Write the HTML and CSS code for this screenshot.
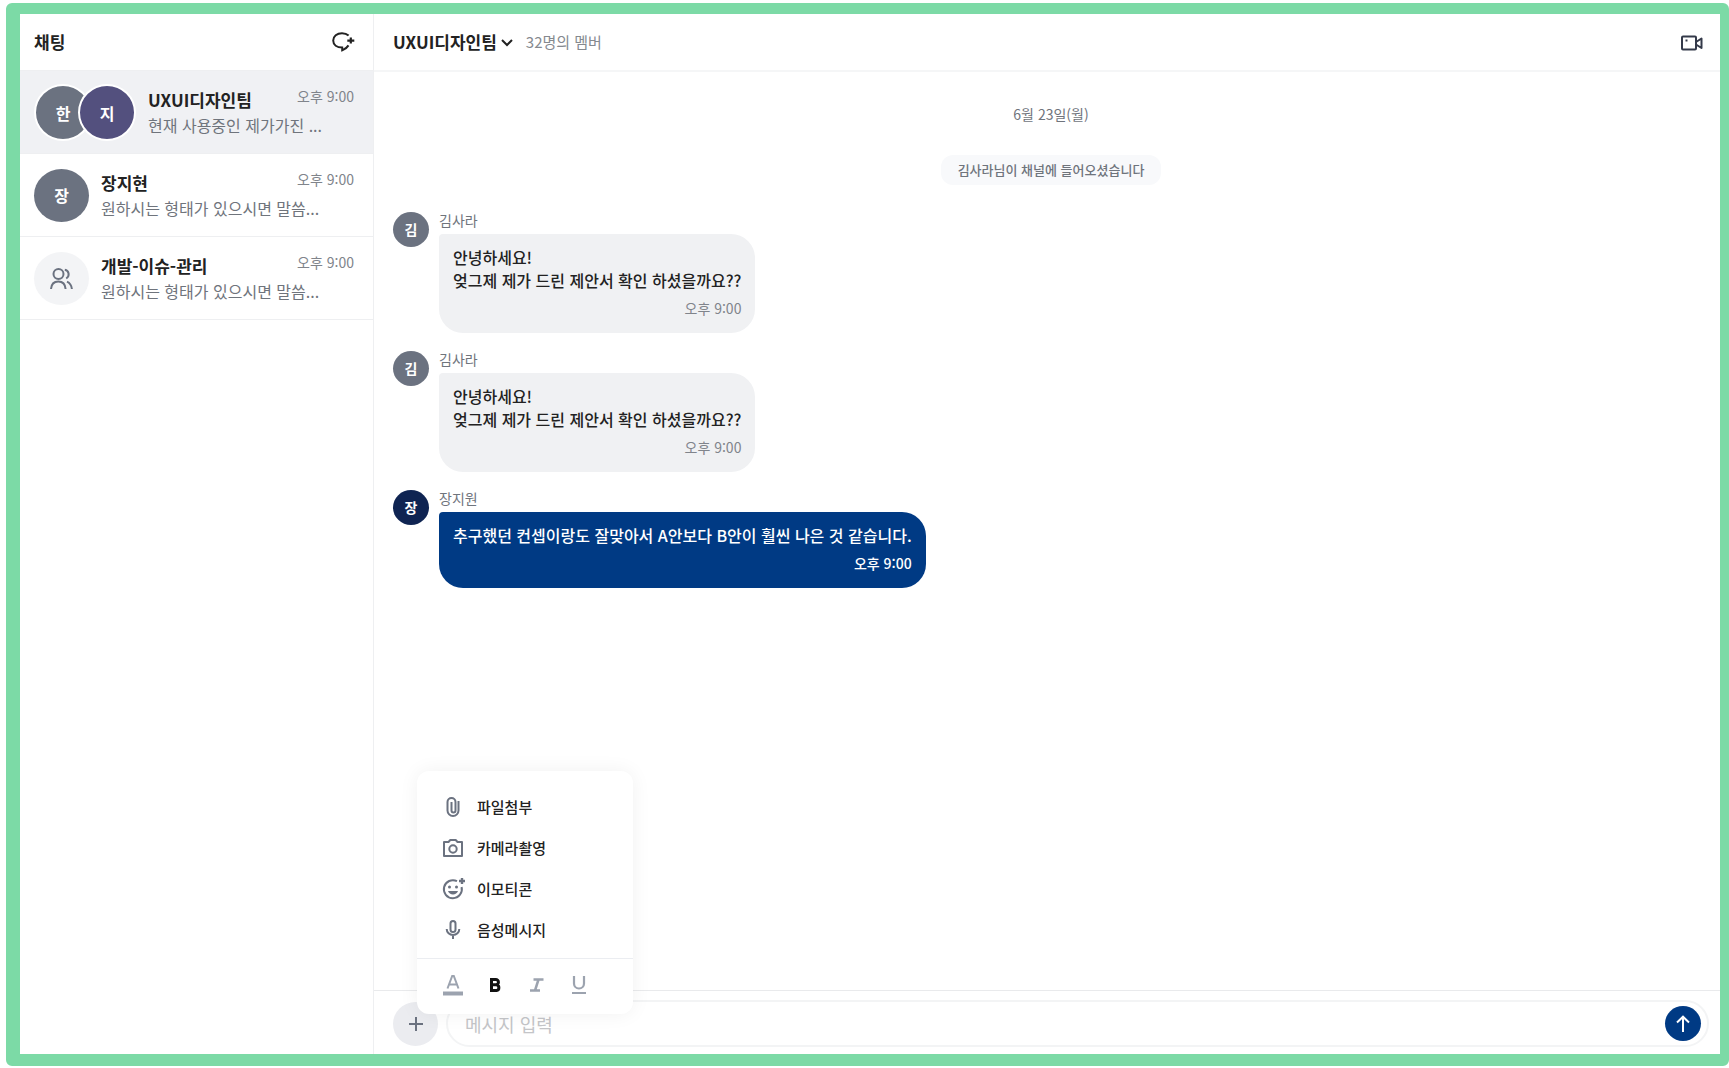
FILE: index.html
```html
<!DOCTYPE html>
<html lang="ko">
<head>
    <meta charset="UTF-8">
    <meta name="viewport" content="width=device-width, initial-scale=1.0">
    <title>채팅</title>
    <link rel="stylesheet" href="styles.css">
</head>
<body>
    <div class="app">
        <!-- 채팅방 목록 -->
        <aside class="sidebar">
            <header class="sidebar-header">
                <h1 class="title">채팅</h1>
                <button class="icon-btn" type="button" aria-label="새 채팅">
                    <svg width="24" height="24" viewBox="0 0 24 24" fill="none" stroke="#222" stroke-width="2">
                        <path d="M17.6 5.6C15.8 3.9 13.6 3.2 11 3.2 6 3.2 2.2 6.2 2.2 10.6S6 17.6 11.2 17.6v2.8c2.600-1 4.800-2.600 6.300-5"/>
                        <path d="M19.800 7.600v6M16.300 10.600h7" stroke-width="2.200"/>
                    </svg>
                </button>
            </header>
            <ul class="room-list">
                <li>
                    <a class="room active" href="#">
                        <span class="avatar-group">
                            <span class="avatar ring">한</span>
                            <span class="avatar ring purple">지</span>
                        </span>
                        <span class="room-text">
                            <span class="room-name">UXUI디자인팀</span>
                            <span class="room-last">현재 사용중인 제가가진 ...</span>
                        </span>
                        <time class="room-time">오후 9:00</time>
                    </a>
                </li>
                <li>
                    <a class="room" href="#">
                        <span class="avatar">장</span>
                        <span class="room-text">
                            <span class="room-name">장지현</span>
                            <span class="room-last">원하시는 형태가 있으시면 말씀...</span>
                        </span>
                        <time class="room-time">오후 9:00</time>
                    </a>
                </li>
                <li>
                    <a class="room" href="#">
                        <span class="avatar light">
                            <svg width="24" height="24" viewBox="1 -1 24 24" fill="none" stroke="#6b7280" stroke-width="2">
                                <circle cx="9.500" cy="7" r="5"/>
                                <path d="M2 22c.4-5 3.400-7.500 7.300-7.500s6.900 2.500 7.300 7.500"/>
                                <path d="M15.800 2.800c4.300.7 5.300 6.300 1.400 8.700M18 14.600c2.900 1.300 4.500 3.800 4.900 7.400"/>
                            </svg>
                        </span>
                        <span class="room-text">
                            <span class="room-name">개발-이슈-관리</span>
                            <span class="room-last">원하시는 형태가 있으시면 말씀...</span>
                        </span>
                        <time class="room-time">오후 9:00</time>
                    </a>
                </li>
            </ul>
        </aside>

        <!-- 대화 영역 -->
        <main class="chat">
            <header class="chat-header">
                <button class="title channel" type="button">
                    UXUI디자인팀
                    <svg width="14" height="10" viewBox="0 0 14 10" fill="none" stroke="#222" stroke-width="2">
                        <path d="M2 3l5 5 5-5"/>
                    </svg>
                </button>
                <span class="members">32명의 멤버</span>
                <button class="icon-btn video" type="button" aria-label="화상 통화">
                    <svg width="24" height="20" viewBox="0 0 24 20" fill="none" stroke="#343a4a" stroke-width="2" stroke-linejoin="round">
                        <rect x="2" y="4.500" width="14" height="13" rx="1"/>
                        <path d="M16 10l5.500-3.500v9.500L16 12.500"/>
                        <path d="M5.500 8.500h2"/>
                    </svg>
                </button>
            </header>

            <div class="messages">
                <time class="date">6월 23일(월)</time>
                <p class="notice">김사라님이 채널에 들어오셨습니다</p>

                <article class="message">
                    <span class="avatar small">김</span>
                    <div class="message-body">
                        <span class="sender">김사라</span>
                        <div class="bubble">
                            <p>안녕하세요!<br>엊그제 제가 드린 제안서 확인 하셨을까요??</p>
                            <time>오후 9:00</time>
                        </div>
                    </div>
                </article>
                <article class="message">
                    <span class="avatar small">김</span>
                    <div class="message-body">
                        <span class="sender">김사라</span>
                        <div class="bubble">
                            <p>안녕하세요!<br>엊그제 제가 드린 제안서 확인 하셨을까요??</p>
                            <time>오후 9:00</time>
                        </div>
                    </div>
                </article>
                <article class="message mine">
                    <span class="avatar small">장</span>
                    <div class="message-body">
                        <span class="sender">장지원</span>
                        <div class="bubble">
                            <p>추구했던 컨셉이랑도 잘맞아서 A안보다 B안이 훨씬 나은 것 같습니다.</p>
                            <time>오후 9:00</time>
                        </div>
                    </div>
                </article>
            </div>

            <form class="composer">
                <button class="add-btn" type="button" aria-label="추가">
                    <svg width="16" height="16" viewBox="0 0 16 16" stroke="#6b7280" stroke-width="2">
                        <path d="M8 1v14M1 8h14"/>
                    </svg>
                </button>
                <div class="field">
                    <input type="text" placeholder="메시지 입력" aria-label="메시지 입력">
                    <button class="send-btn" type="submit" aria-label="보내기">
                        <svg width="16" height="18" viewBox="0 0 16 18" fill="none" stroke="#fff" stroke-width="2">
                            <path d="M8 17V2M2 7.500l6-5.800 6 5.800"/>
                        </svg>
                    </button>
                </div>

                <!-- + 버튼 메뉴 -->
                <div class="menu">
                    <div class="menu-list">
                        <button class="menu-item" type="button">
                            <svg width="24" height="24" viewBox="0 0 24 24" fill="none" stroke="#6b7280" stroke-width="2">
                                <path d="M17.500 6v9.500a5.500 5.500 0 0 1-11 0V7a4 4 0 0 1 8 0v8.500a2 2 0 0 1-4 0V7"/>
                            </svg>
                            파일첨부
                        </button>
                        <button class="menu-item" type="button">
                            <svg width="24" height="24" viewBox="0 0 24 24" fill="none" stroke="#6b7280" stroke-width="2" stroke-linejoin="round">
                                <path d="M3 6h4.500l1.800-2h5.400L16.500 6H21v14H3z"/>
                                <circle cx="12" cy="13" r="3.700"/>
                            </svg>
                            카메라촬영
                        </button>
                        <button class="menu-item" type="button">
                            <svg class="emoji" width="24" height="24" viewBox="0 0 24 24" fill="none" stroke="#6b7280" stroke-width="2">
                                <path d="M16 4.200A9 9 0 1 0 20.600 10"/>
                                <path d="M21 1v6M18 4h6" stroke-width="2.400"/>
                                <path d="M7 14h10c-.8 2.300-2.700 3.500-5 3.500S7.800 16.300 7 14z" fill="#6b7280" stroke="none"/>
                                <circle cx="8.500" cy="10" r="1.500" fill="#6b7280" stroke="none"/>
                                <circle cx="15.500" cy="10" r="1.500" fill="#6b7280" stroke="none"/>
                            </svg>
                            이모티콘
                        </button>
                        <button class="menu-item" type="button">
                            <svg width="24" height="24" viewBox="0 0 24 24" fill="none" stroke="#6b7280" stroke-width="2">
                                <rect x="9.500" y="3" width="5" height="11" rx="2.500"/>
                                <path d="M5.700 11a6.300 6 0 0 0 12.600 0M12 17v4"/>
                            </svg>
                            음성메시지
                        </button>
                    </div>
                    <div class="format-bar">
                        <button type="button" aria-label="글자 색">
                            <svg width="24" height="24" viewBox="0 0 24 24" fill="none" stroke="#9ca3af" stroke-width="2">
                                <path d="M6.500 15.500L11.200 3h1.600l4.700 12.500M8.300 11.500h7.400"/>
                                <path d="M2 20.500h20" stroke-width="4"/>
                            </svg>
                        </button>
                        <button type="button" aria-label="굵게">
                            <svg width="24" height="24" viewBox="0 0 24 24" fill="none" stroke="#111" stroke-width="3">
                                <path d="M8.500 6.500h4.300a2.600 2.600 0 0 1 0 5.300H8.500zM8.500 11.800h5a2.900 2.900 0 0 1 0 5.700h-5z"/>
                            </svg>
                        </button>
                        <button type="button" aria-label="기울임">
                            <svg width="24" height="24" viewBox="0 0 24 24" fill="none" stroke="#9ca3af" stroke-width="2.500">
                                <path d="M8.500 6.500h10M5 17.500h10M13.500 6.500l-3.500 11"/>
                            </svg>
                        </button>
                        <button type="button" aria-label="밑줄">
                            <svg width="24" height="24" viewBox="0 0 24 24" fill="none" stroke="#9ca3af" stroke-width="2.200">
                                <path d="M7 3v7.500a5 5 0 0 0 10 0V3M5 20h14"/>
                            </svg>
                        </button>
                    </div>
                </div>
            </form>
        </main>
    </div>
</body>
</html>
```
FILE: styles.css
```css
* {
    box-sizing: border-box;
}
body {
    display: flex;
    min-height: 100vh;
    margin: 0;
    padding: 3px 0 2px 6px;
    font-family: "Noto Sans CJK KR", sans-serif;
    font-size: 16px;
    color: #222;
    background-color: #fff;
}
h1, p, ul {
    margin: 0;
    padding: 0;
}
button {
    padding: 0;
    border: 0;
    background: none;
    font: inherit;
    color: inherit;
    cursor: pointer;
}
svg {
    display: block;
}
.app {
    flex: 1;
    display: flex;
    min-width: 0;
    border: solid #7cdaa6;
    border-width: 11px 9px 12px 14px;
    border-radius: 6px;
}
.title {
    font-size: 17px;
    font-weight: 700;
    line-height: 24px;
}

/* Sidebar */
.sidebar {
    flex: 0 0 354px;
    border-right: 1px solid #eeeff1;
}
.sidebar-header {
    display: flex;
    align-items: center;
    justify-content: space-between;
    height: 57px;
    padding: 0 18px 0 14px;
    border-bottom: 1px solid #eeeff1;
}
.room-list {
    list-style: none;
}
.room {
    display: flex;
    align-items: center;
    gap: 12px;
    height: 83px;
    padding: 0 19px 0 14px;
    border-bottom: 1px solid #eeeff1;
    color: inherit;
    text-decoration: none;
}
.room.active {
    background-color: #f0f1f4;
}
.room-text {
    flex: 1;
    display: flex;
    flex-direction: column;
    white-space: nowrap;
}
.room-name {
    font-size: 17px;
    font-weight: 700;
    line-height: 26px;
}
.room-last {
    line-height: 24px;
    color: #6f747c;
}
.room-time {
    display: flex;
    justify-content: flex-end;
    align-self: flex-start;
    width: 0;
    padding-top: 15px;
    font-size: 14px;
    line-height: 20px;
    color: #80848b;
    white-space: nowrap;
}

/* Avatars */
.avatar {
    flex: none;
    display: flex;
    align-items: center;
    justify-content: center;
    width: 55px;
    height: 53px;
    border-radius: 50%;
    background-color: #6b7280;
    color: #fff;
    font-weight: 700;
    line-height: 20px;
}
.avatar-group {
    display: flex;
    padding-top: 1px;
}
.avatar.ring {
    width: 58px;
    height: 57px;
    border: 2px solid #fff;
}
.avatar.ring + .ring {
    margin-left: -14px;
}
.avatar.purple {
    background-color: #53507e;
}
.avatar.light {
    background-color: #f3f4f6;
}
.avatar.small {
    width: 36px;
    height: 35px;
    padding-bottom: 2px;
    font-size: 14px;
}
.mine .avatar {
    background-color: #0f2452;
}

/* Chat */
.chat {
    flex: 1;
    display: flex;
    flex-direction: column;
    min-width: 0;
}
.chat-header {
    display: flex;
    align-items: center;
    height: 58px;
    padding: 0 16px 0 19px;
    border-bottom: 2px solid #f5f6f7;
}
.channel {
    display: flex;
    align-items: center;
    gap: 3px;
}
.members {
    margin-left: 12px;
    font-size: 15px;
    line-height: 24px;
    color: #85898f;
}
.video {
    margin-left: auto;
}
.messages {
    flex: 1;
    display: flex;
    flex-direction: column;
    padding: 32px 11px 32px 19px;
}
.date {
    align-self: center;
    font-size: 14px;
    line-height: 20px;
    color: #6f747c;
}
.notice {
    align-self: center;
    margin: 31px 0 27px;
    padding: 5px 17px;
    border-radius: 12px;
    background-color: #f8f9fb;
    font-size: 13px;
    font-weight: 500;
    line-height: 20px;
    color: #6f747c;
}
.message {
    display: flex;
    gap: 10px;
    margin-bottom: 18px;
}
.message-body {
    display: flex;
    flex-direction: column;
    gap: 6px;
}
.sender {
    font-size: 14px;
    line-height: 16px;
    color: #6f747c;
}
.bubble {
    display: flex;
    flex-direction: column;
    gap: 6px;
    padding: 12px 14px 15px;
    border-radius: 4px 24px 24px 24px;
    background-color: #f0f1f3;
    font-weight: 500;
    line-height: 23px;
}
.bubble time {
    align-self: flex-end;
    font-size: 14px;
    font-weight: 400;
    line-height: 20px;
    color: #80848b;
}
.mine .bubble {
    background-color: #003a84;
    color: #fff;
}
.mine .bubble time {
    font-weight: 500;
    color: #fff;
}

/* Composer */
.composer {
    position: relative;
    display: flex;
    align-items: center;
    gap: 8px;
    height: 64px;
    padding: 2px 11px 0 19px;
    border-top: 1px solid #e9eaec;
}
.add-btn {
    flex: none;
    display: flex;
    align-items: center;
    justify-content: center;
    width: 45px;
    height: 44px;
    border-radius: 50%;
    background-color: #ebecf0;
}
.field {
    flex: 1;
    display: flex;
    align-items: center;
    height: 47px;
    padding: 0 6px 0 16px;
    border: 2px solid #f3f4f5;
    border-radius: 24px;
}
.field input {
    flex: 1;
    min-width: 0;
    padding: 0 1px;
    border: 0;
    outline: none;
    background: none;
    font: inherit;
    font-size: 18px;
    line-height: 28px;
}
.field input::placeholder {
    color: #c4c5c8;
}
.send-btn {
    flex: none;
    display: flex;
    align-items: center;
    justify-content: center;
    width: 36px;
    height: 35px;
    border-radius: 50%;
    background-color: #003a84;
}

/* Popup menu over the composer */
.menu {
    position: absolute;
    left: 43px;
    bottom: 40px;
    width: 216px;
    border-radius: 12px;
    background-color: #fff;
    box-shadow: 0 0 20px rgba(0, 0, 0, 0.06);
}
.menu-list {
    display: flex;
    flex-direction: column;
    padding: 15px 24px 8px;
}
.menu-item {
    display: flex;
    align-items: center;
    gap: 12px;
    height: 41px;
    font-size: 15px;
    font-weight: 500;
}
.emoji {
    overflow: visible;
}
.format-bar {
    display: flex;
    gap: 18px;
    padding: 14px 24px 17px;
    border-top: 1px solid #ebedf1;
}
```
